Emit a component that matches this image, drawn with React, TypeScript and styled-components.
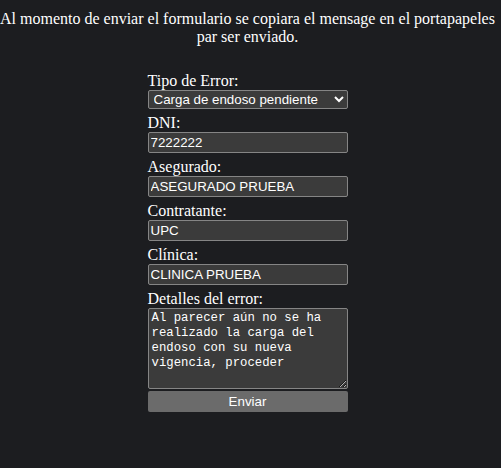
import React, { useState } from 'react'
import styled, { createGlobalStyle } from 'styled-components'

const GlobalStyle = createGlobalStyle`
  html, body {
    margin: 0;
    background-color: #1c1d20;
    color-scheme: dark;
  }
  body {
    padding: 8px 0;
    font-family: "Liberation Serif", "Times New Roman", serif;
    font-size: 16px;
    color: #ffffff;
  }
`

function App() {
  const [tipo, setTipo] = useState('endoso')
  const [dni, setDni] = useState('7222222')
  const [asegurado, setAsegurado] = useState('ASEGURADO PRUEBA')
  const [contratante, setContratante] = useState('UPC')
  const [clinica, setClinica] = useState('CLINICA PRUEBA')
  const [detalle, setDetalle] = useState(
    'Al parecer aún no se ha realizado la carga del endoso con su nueva vigencia, proceder'
  )

  return (
    <Container>
      <GlobalStyle />
      <p className='aviso'>
        Al momento de enviar el formulario se copiara el mensage en el portapapeles par ser enviado.
      </p>
      <Form onSubmit={(e) => e.preventDefault()}>
        <Label>Tipo de Error:</Label>
        <Select value={tipo} onChange={(e) => setTipo(e.target.value)}>
          <option value='endoso'>Carga de endoso pendiente</option>
          <option value='otro'>Otro</option>
        </Select>
        <Label>DNI:</Label>
        <Input value={dni} onChange={(e) => setDni(e.target.value)} />
        <Label>Asegurado:</Label>
        <Input value={asegurado} onChange={(e) => setAsegurado(e.target.value)} />
        <Label>Contratante:</Label>
        <Input value={contratante} onChange={(e) => setContratante(e.target.value)} />
        <Label>Clínica:</Label>
        <Input value={clinica} onChange={(e) => setClinica(e.target.value)} />
        <Label>Detalles del error:</Label>
        <TextArea value={detalle} onChange={(e) => setDetalle(e.target.value)} />
        <Button type='submit'>Enviar</Button>
      </Form>
    </Container>
  )
}

export default App

const Container = styled.div`
  width: 495px;
  display: flex;
  flex-direction: column;
  align-items: center;

  .aviso {
    margin: 2px 0 0 0;
    text-align: center;
    line-height: 18px;
    width: 495px;
  }
`

const Form = styled.form`
  width: 200px;
  margin-top: 26px;
  display: flex;
  flex-direction: column;
`

const Label = styled.label`
  line-height: 18px;
  margin-top: 5px;

  &:first-child {
    margin-top: 0;
  }
`

const field = `
  box-sizing: border-box;
  width: 200px;
  margin: 0;
  background-color: #3b3b3b;
  color: #ffffff;
  border: 1px solid #858585;
  border-radius: 2px;
  font-family: "Liberation Sans", Arial, sans-serif;
  font-size: 13.33px;
`

const Select = styled.select`
  ${field}
  height: 19px;
  padding: 0 0 0 1px;
`

const Input = styled.input`
  ${field}
  height: 21px;
  padding: 1px 2px;
  outline: none;
`

const TextArea = styled.textarea`
  ${field}
  height: 81px;
  padding: 2px 3px;
  font-family: "Liberation Mono", "Courier New", monospace;
  font-size: 12.3px;
  line-height: 15px;
  resize: vertical;
`

const Button = styled.button`
  box-sizing: border-box;
  width: 200px;
  height: 21px;
  margin-top: 2px;
  background-color: #6b6b6b;
  color: #ffffff;
  border: none;
  border-radius: 2px;
  font-family: "Liberation Sans", Arial, sans-serif;
  font-size: 13.33px;
  cursor: pointer;
`
